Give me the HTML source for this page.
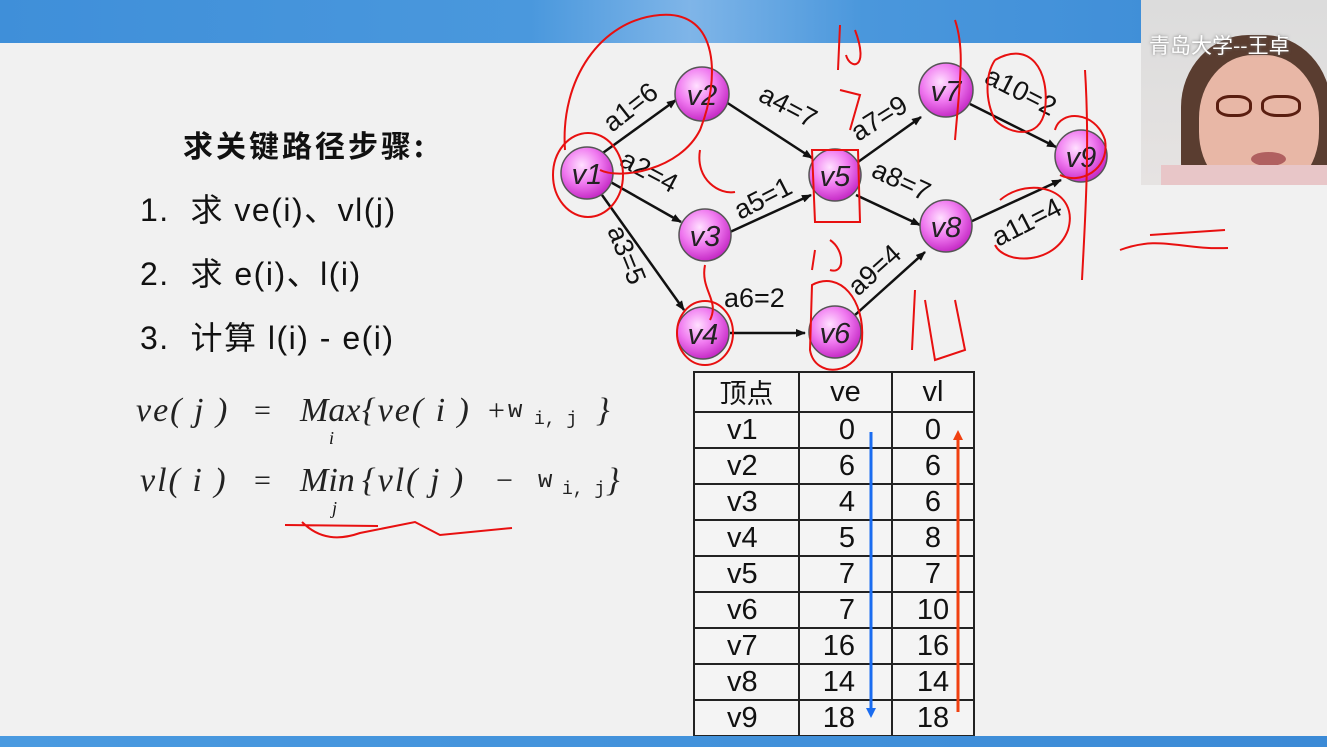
<!DOCTYPE html>
<html><head><meta charset="utf-8"><style>
html,body{margin:0;padding:0;}
body{width:1327px;height:747px;overflow:hidden;background:#f1f1f1;position:relative;font-family:"Liberation Sans","Noto Sans CJK SC",sans-serif;}
.top{position:absolute;left:0;top:0;width:1327px;height:43px;background:linear-gradient(90deg,#3f8fd9 0%,#4a98dd 40%,#7fb5e8 52%,#4a97dc 65%,#3a8ad6 100%);}
.bot{position:absolute;left:0;top:736px;width:1327px;height:11px;background:linear-gradient(90deg,#4a9ae0,#3b8ad6);}
.t{position:absolute;color:#111;white-space:nowrap;}
.f{position:absolute;white-space:nowrap;font-family:'Liberation Serif',serif;font-style:italic;font-size:34px;color:#222;}
.fn{position:absolute;white-space:nowrap;font-family:'Liberation Serif',serif;font-size:30px;color:#222;}
.fm{position:absolute;white-space:nowrap;font-family:'Liberation Mono',monospace;font-size:24px;color:#222;}
.cam{position:absolute;left:1141px;top:0;width:186px;height:185px;background:linear-gradient(180deg,#dcdcdc,#e6e3e2);overflow:hidden;}
table{position:absolute;left:693px;top:371px;border-collapse:collapse;background:#f4f4f4;}
td{border:2px solid #222;font-size:29px;color:#111;padding:0;height:34px;line-height:34px;}
</style></head><body>
<div class="top"></div>
<div class="t" style="left:183px;top:122px;font-size:30px;font-weight:bold;font-family:'Noto Sans CJK SC',sans-serif;letter-spacing:3px;">求关键路径步骤:</div>
<div class="t" style="left:140px;top:185px;font-size:32px;letter-spacing:1.5px;">1.&nbsp; <span style="font-family:'Noto Sans CJK SC',sans-serif">求</span> ve(i)<span style="font-family:'Noto Sans CJK SC',sans-serif">、</span>vl(j)</div>
<div class="t" style="left:140px;top:249px;font-size:32px;letter-spacing:1.5px;">2.&nbsp; <span style="font-family:'Noto Sans CJK SC',sans-serif">求</span> e(i)<span style="font-family:'Noto Sans CJK SC',sans-serif">、</span>l(i)</div>
<div class="t" style="left:140px;top:313px;font-size:32px;letter-spacing:1.5px;">3.&nbsp; <span style="font-family:'Noto Sans CJK SC',sans-serif">计算</span> l(i) - e(i)</div>

<div class="f" style="left:136px;top:392px;letter-spacing:2px">ve( j )</div>
<div class="fn" style="left:254px;top:394px;">=</div>
<div class="f" style="left:300px;top:392px;">Max</div>
<div class="f" style="left:362px;top:392px;letter-spacing:2px">{ve( i )</div>
<div class="fn" style="left:488px;top:394px;">+</div>
<div class="fm" style="left:508px;top:398px;">w</div>
<div class="fm" style="left:534px;top:410px;font-size:18px">i, j</div>
<div class="f" style="left:596px;top:392px;">}</div>
<div class="t" style="left:329px;top:428px;font-size:18px;font-family:'Liberation Serif';font-style:italic;">i</div>

<div class="f" style="left:140px;top:462px;letter-spacing:2px">vl( i )</div>
<div class="fn" style="left:254px;top:464px;">=</div>
<div class="f" style="left:300px;top:462px;">Min</div>
<div class="f" style="left:362px;top:462px;letter-spacing:2px">{vl( j )</div>
<div class="fn" style="left:496px;top:464px;">&minus;</div>
<div class="fm" style="left:538px;top:468px;">w</div>
<div class="fm" style="left:562px;top:480px;font-size:18px">i, j</div>
<div class="f" style="left:606px;top:462px;">}</div>
<div class="t" style="left:332px;top:498px;font-size:18px;font-family:'Liberation Serif';font-style:italic;">j</div>

<table>
<tr><td style="width:103px;text-align:center;font-family:'Noto Sans CJK SC',sans-serif;height:38px;font-size:27px">顶点</td><td style="width:91px;text-align:center">ve</td><td style="width:80px;text-align:center">vl</td></tr>
<tr><td style="padding-left:32px">v1</td><td style="text-align:right;padding-right:36px">0</td><td style="text-align:center">0</td></tr>
<tr><td style="padding-left:32px">v2</td><td style="text-align:right;padding-right:36px">6</td><td style="text-align:center">6</td></tr>
<tr><td style="padding-left:32px">v3</td><td style="text-align:right;padding-right:36px">4</td><td style="text-align:center">6</td></tr>
<tr><td style="padding-left:32px">v4</td><td style="text-align:right;padding-right:36px">5</td><td style="text-align:center">8</td></tr>
<tr><td style="padding-left:32px">v5</td><td style="text-align:right;padding-right:36px">7</td><td style="text-align:center">7</td></tr>
<tr><td style="padding-left:32px">v6</td><td style="text-align:right;padding-right:36px">7</td><td style="text-align:center">10</td></tr>
<tr><td style="padding-left:32px">v7</td><td style="text-align:right;padding-right:36px">16</td><td style="text-align:center">16</td></tr>
<tr><td style="padding-left:32px">v8</td><td style="text-align:right;padding-right:36px">14</td><td style="text-align:center">14</td></tr>
<tr><td style="padding-left:32px">v9</td><td style="text-align:right;padding-right:36px">18</td><td style="text-align:center">18</td></tr>
</table>

<svg style="position:absolute;left:0;top:0" width="1327" height="747">
<defs>
<radialGradient id="g" cx="0.4" cy="0.35" r="0.7"><stop offset="0" stop-color="#ffe0ff"/><stop offset="0.5" stop-color="#f07af0"/><stop offset="1" stop-color="#c020c0"/></radialGradient>
<marker id="a" markerWidth="10" markerHeight="8" refX="9" refY="4" orient="auto" markerUnits="userSpaceOnUse"><path d="M0,0 L10,4 L0,8 z" fill="#111"/></marker>
</defs>
<g stroke="#111" stroke-width="2.5" marker-end="url(#a)">
<line x1="600" y1="155" x2="676" y2="100"/>
<line x1="607" y1="180" x2="681" y2="222"/>
<line x1="602" y1="195" x2="684" y2="310"/>
<line x1="726" y1="102" x2="812" y2="158"/>
<line x1="730" y1="232" x2="811" y2="195"/>
<line x1="730" y1="333" x2="805" y2="333"/>
<line x1="858" y1="162" x2="921" y2="117"/>
<line x1="856" y1="195" x2="920" y2="225"/>
<line x1="855" y1="315" x2="925" y2="252"/>
<line x1="970" y1="104" x2="1056" y2="147"/>
<line x1="970" y1="222" x2="1061" y2="180"/>
</g>
<g stroke="#555" stroke-width="1.5" fill="url(#g)">
<circle cx="587" cy="173" r="26"/><circle cx="702" cy="94" r="27"/><circle cx="705" cy="235" r="26"/>
<circle cx="703" cy="333" r="26"/><circle cx="835" cy="175" r="26"/><circle cx="835" cy="332" r="26"/>
<circle cx="946" cy="90" r="27"/><circle cx="946" cy="226" r="26"/><circle cx="1081" cy="156" r="26"/>
</g>
<g font-family="Liberation Sans" font-size="29" fill="#222" text-anchor="middle" font-style="italic">
<text x="587" y="184">v1</text><text x="702" y="105">v2</text><text x="705" y="246">v3</text>
<text x="703" y="344">v4</text><text x="835" y="186">v5</text><text x="835" y="343">v6</text>
<text x="946" y="101">v7</text><text x="946" y="237">v8</text><text x="1081" y="167">v9</text>
</g>
<g font-family="Liberation Sans" font-size="27" fill="#111">
<text transform="translate(612,133) rotate(-38)">a1=6</text>
<text transform="translate(618,165) rotate(28)">a2=4</text>
<text transform="translate(607,230) rotate(68)">a3=5</text>
<text transform="translate(757,100) rotate(28)">a4=7</text>
<text transform="translate(740,220) rotate(-27)">a5=1</text>
<text x="724" y="307">a6=2</text>
<text transform="translate(858,142) rotate(-32)">a7=9</text>
<text transform="translate(870,176) rotate(25)">a8=7</text>
<text transform="translate(858,297) rotate(-42)">a9=4</text>
<text transform="translate(983,82) rotate(27)">a10=2</text>
<text transform="translate(998,247) rotate(-27)">a11=4</text>
</g>
<line x1="871" y1="432" x2="871" y2="712" stroke="#1a6cf0" stroke-width="3"/>
<path d="M866,708 L871,718 L876,708 z" fill="#1a6cf0"/>
<line x1="958" y1="436" x2="958" y2="712" stroke="#f04010" stroke-width="3"/>
<path d="M953,440 L958,430 L963,440 z" fill="#f04010"/>
<g stroke="#e81010" stroke-width="2" fill="none">
<ellipse cx="588" cy="175" rx="35" ry="42"/>
<path d="M565,150 C560,80 600,20 660,15 C720,10 720,80 700,130 C680,170 620,180 600,170"/>
<ellipse cx="705" cy="333" rx="28" ry="32"/>
<path d="M812,285 C840,270 865,300 862,340 C860,375 815,380 810,350 Z"/>
<path d="M812,150 L858,150 L860,222 L815,222 Z"/>
<path d="M955,20 C965,50 960,80 955,140"/>
<path d="M995,60 C1030,40 1050,70 1045,110 C1040,140 1010,135 995,120 C985,100 985,75 995,60"/>
<path d="M1000,200 C1030,175 1080,190 1068,230 C1055,265 1005,265 995,245"/>
<path d="M1055,130 C1060,110 1095,110 1105,140 C1110,170 1080,185 1060,175"/>
<path d="M1085,70 C1090,150 1085,220 1082,280"/>
<path d="M1120,250 C1160,235 1180,250 1228,248 M1150,235 L1225,230"/>
<path d="M840,25 L838,70 M855,30 C870,70 850,70 846,55 M840,90 L860,95 L850,130"/>
<path d="M815,250 L812,270 M830,240 C845,250 845,275 830,270"/>
<path d="M915,290 L912,350 M925,300 L935,360 L965,350 L955,300"/>
<path d="M285,525 L378,526 M302,522 C320,540 340,540 360,533 L415,522 L440,535 L512,528"/>
<path d="M700,150 C695,180 720,195 735,192 M705,265 C700,290 720,300 710,320"/>
</g>
</svg>

<div class="cam">
<div style="position:absolute;left:40px;top:35px;width:150px;height:160px;border-radius:45% 45% 20% 20%;background:#5a3d30;"></div>
<div style="position:absolute;left:58px;top:55px;width:120px;height:140px;border-radius:45%;background:#e8b7a6;"></div>
<div style="position:absolute;left:75px;top:95px;width:30px;height:16px;border:3px solid #5a1e10;border-radius:40%;"></div>
<div style="position:absolute;left:120px;top:95px;width:34px;height:16px;border:3px solid #5a1e10;border-radius:40%;"></div>
<div style="position:absolute;left:110px;top:152px;width:35px;height:14px;border-radius:50%;background:#b06060;"></div>
<div style="position:absolute;left:20px;top:165px;width:170px;height:30px;background:#e8c6c8;"></div>
<div style="position:absolute;left:8px;top:30px;font-size:21px;color:#fff;font-family:'Noto Sans CJK SC',sans-serif;text-shadow:0 0 3px #777;">青岛大学--王卓</div>
</div>
<div class="bot"></div>
</body></html>
